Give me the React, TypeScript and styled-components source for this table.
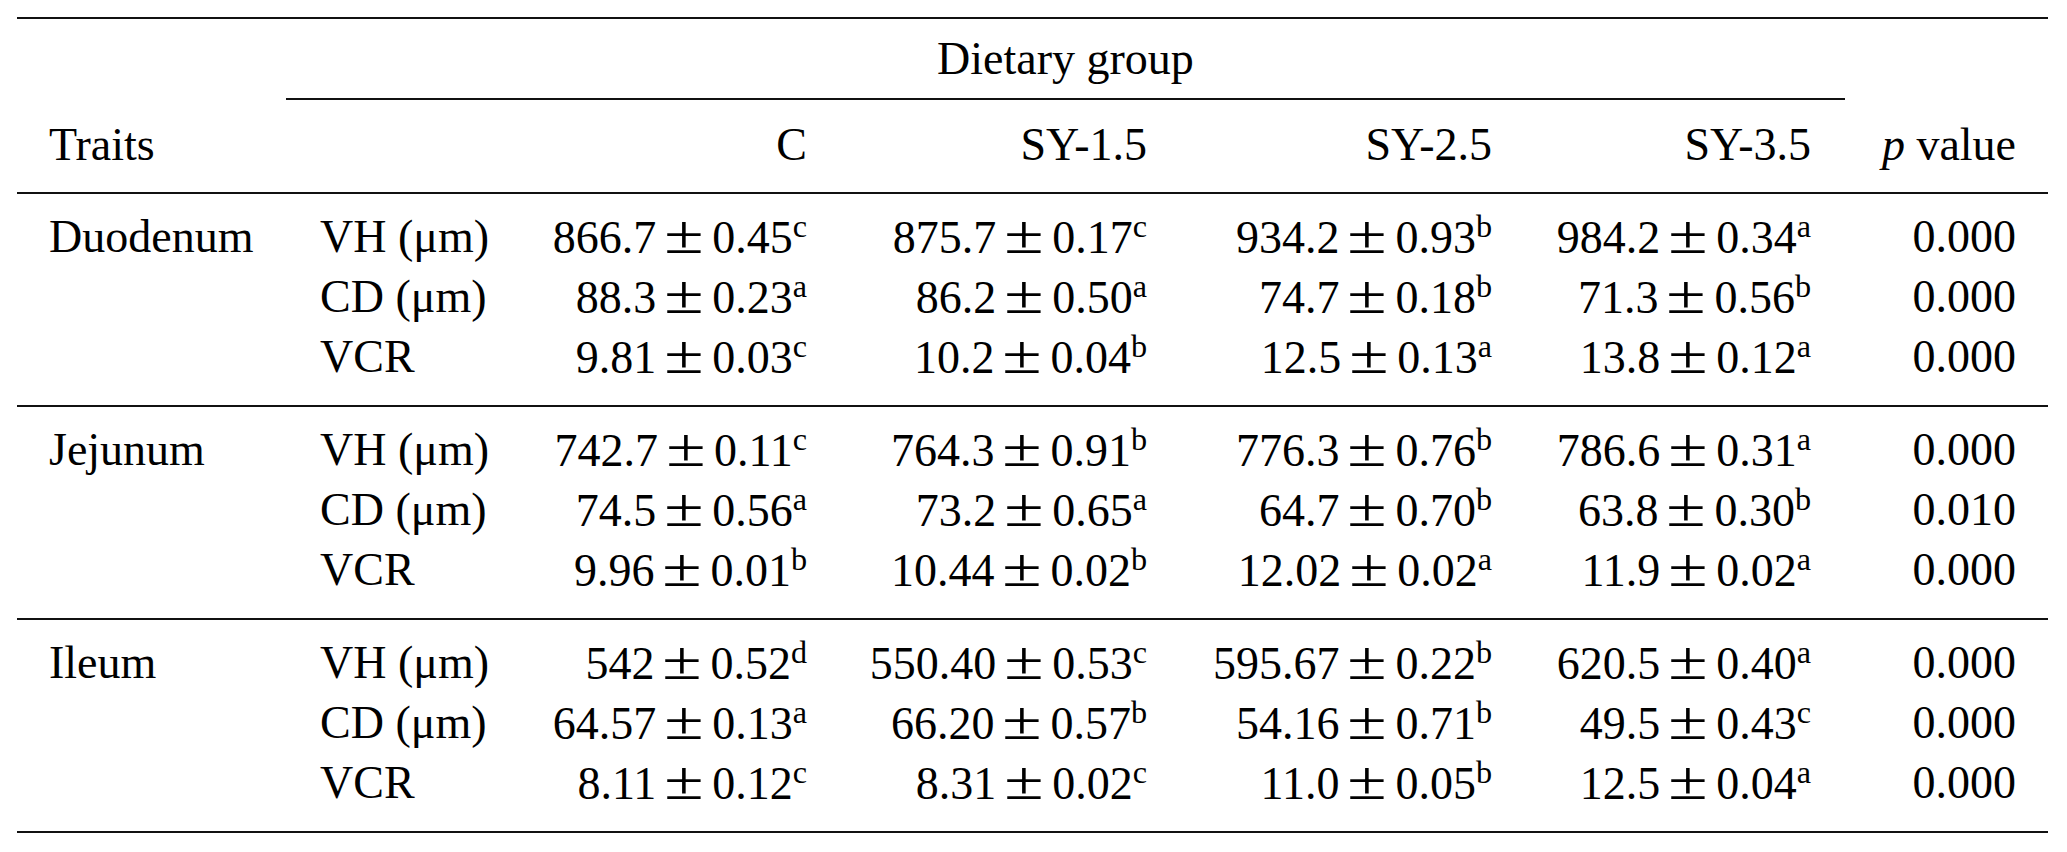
import * as React from "react";
import styled, { createGlobalStyle } from "styled-components";

// column widths: group | trait | C | SY-1.5 | SY-2.5 | SY-3.5 | p value
const COLS = "303px 180px 307px 340px 345px 319px 237px";

type Cell = { mean: string; sd: string; sup: string };

type TraitRow = {
    trait: string;
    values: Cell[];
    p: string;
};

type Segment = {
    name: string;
    rows: TraitRow[];
};

const v = (mean: string, sd: string, sup: string): Cell => ({ mean, sd, sup });

const data: Segment[] = [
    {
        name: "Duodenum",
        rows: [
            {
                trait: "VH (μm)",
                values: [v("866.7", "0.45", "c"), v("875.7", "0.17", "c"), v("934.2", "0.93", "b"), v("984.2", "0.34", "a")],
                p: "0.000",
            },
            {
                trait: "CD (μm)",
                values: [v("88.3", "0.23", "a"), v("86.2", "0.50", "a"), v("74.7", "0.18", "b"), v("71.3", "0.56", "b")],
                p: "0.000",
            },
            {
                trait: "VCR",
                values: [v("9.81", "0.03", "c"), v("10.2", "0.04", "b"), v("12.5", "0.13", "a"), v("13.8", "0.12", "a")],
                p: "0.000",
            },
        ],
    },
    {
        name: "Jejunum",
        rows: [
            {
                trait: "VH (μm)",
                values: [v("742.7", "0.11", "c"), v("764.3", "0.91", "b"), v("776.3", "0.76", "b"), v("786.6", "0.31", "a")],
                p: "0.000",
            },
            {
                trait: "CD (μm)",
                values: [v("74.5", "0.56", "a"), v("73.2", "0.65", "a"), v("64.7", "0.70", "b"), v("63.8", "0.30", "b")],
                p: "0.010",
            },
            {
                trait: "VCR",
                values: [v("9.96", "0.01", "b"), v("10.44", "0.02", "b"), v("12.02", "0.02", "a"), v("11.9", "0.02", "a")],
                p: "0.000",
            },
        ],
    },
    {
        name: "Ileum",
        rows: [
            {
                trait: "VH (μm)",
                values: [v("542", "0.52", "d"), v("550.40", "0.53", "c"), v("595.67", "0.22", "b"), v("620.5", "0.40", "a")],
                p: "0.000",
            },
            {
                trait: "CD (μm)",
                values: [v("64.57", "0.13", "a"), v("66.20", "0.57", "b"), v("54.16", "0.71", "b"), v("49.5", "0.43", "c")],
                p: "0.000",
            },
            {
                trait: "VCR",
                values: [v("8.11", "0.12", "c"), v("8.31", "0.02", "c"), v("11.0", "0.05", "b"), v("12.5", "0.04", "a")],
                p: "0.000",
            },
        ],
    },
];

const groups = ["C", "SY-1.5", "SY-2.5", "SY-3.5"];

const App: React.FunctionComponent = () => {
    return (
        <>
            <GlobalStyle />
            <STable>
                <SHead>
                    <SSpanner>Dietary group</SSpanner>
                    <SHeadCell col={1} edge="left">
                        Traits
                    </SHeadCell>
                    {groups.map((g, i) => (
                        <SHeadCell key={g} col={i + 3} right>
                            {g}
                        </SHeadCell>
                    ))}
                    <SHeadCell col={7} right edge="right">
                        <i>p</i> value
                    </SHeadCell>
                </SHead>
                {data.map((seg) => (
                    <SSegment key={seg.name}>
                        <SSegName>{seg.name}</SSegName>
                        {seg.rows.map((row) => (
                            <React.Fragment key={row.trait}>
                                <STrait>{row.trait}</STrait>
                                {row.values.map((c, i) => (
                                    <SValue key={i}>
                                        {c.mean}
                                        <SPm>±</SPm>
                                        {c.sd}
                                        <SSup>{c.sup}</SSup>
                                    </SValue>
                                ))}
                                <SValue last>{row.p}</SValue>
                            </React.Fragment>
                        ))}
                    </SSegment>
                ))}
            </STable>
        </>
    );
};

const GlobalStyle = createGlobalStyle`
    html, body {
        margin: 0;
        padding: 0;
        background: #fff;
    }
    body {
        font-family: "Liberation Serif", "Times New Roman", serif;
        color: #000;
    }
`;

const STable = styled.div`
    width: 2031px;
    margin: 17px 0 0 17px;
    font-size: 46px;
`;

const SHead = styled.div`
    display: grid;
    grid-template-columns: ${COLS};
    border-top: 2px solid #111;
    border-bottom: 2px solid #111;
`;

const SSpanner = styled.div`
    grid-column: 2 / 7;
    grid-row: 1;
    margin: 0 -34px;
    padding: 10px 0 9px;
    line-height: 60px;
    text-align: center;
    border-bottom: 2px solid #111;
`;

const SHeadCell = styled.div<{ col: number; right?: boolean; edge?: "left" | "right" }>`
    grid-column: ${({ col }) => col};
    grid-row: 2;
    padding: 15px 0 17px;
    padding-left: ${({ edge }) => (edge === "left" ? "32px" : "0")};
    padding-right: ${({ edge }) => (edge === "right" ? "32px" : "0")};
    line-height: 60px;
    text-align: ${({ right }) => (right ? "right" : "left")};
    white-space: nowrap;
`;

const SSegment = styled.div`
    display: grid;
    grid-template-columns: ${COLS};
    grid-auto-rows: 60px;
    padding: 13px 0 18px;
    border-bottom: 2px solid #111;
    line-height: 60px;
`;

const SSegName = styled.div`
    grid-column: 1;
    grid-row: 1 / span 3;
    padding-left: 32px;
`;

const STrait = styled.div`
    grid-column: 2;
    white-space: nowrap;
`;

const SValue = styled.div<{ last?: boolean }>`
    text-align: right;
    white-space: nowrap;
    padding-right: ${({ last }) => (last ? "32px" : "0")};
`;

const SPm = styled.span`
    display: inline-block;
    width: 56px;
    text-align: center;
    font-size: 1.2em;
    line-height: 1;
    transform: scaleX(1.3);
`;

const SSup = styled.span`
    font-size: 0.7em;
    line-height: 1;
    vertical-align: 16px;
`;

export default App;
